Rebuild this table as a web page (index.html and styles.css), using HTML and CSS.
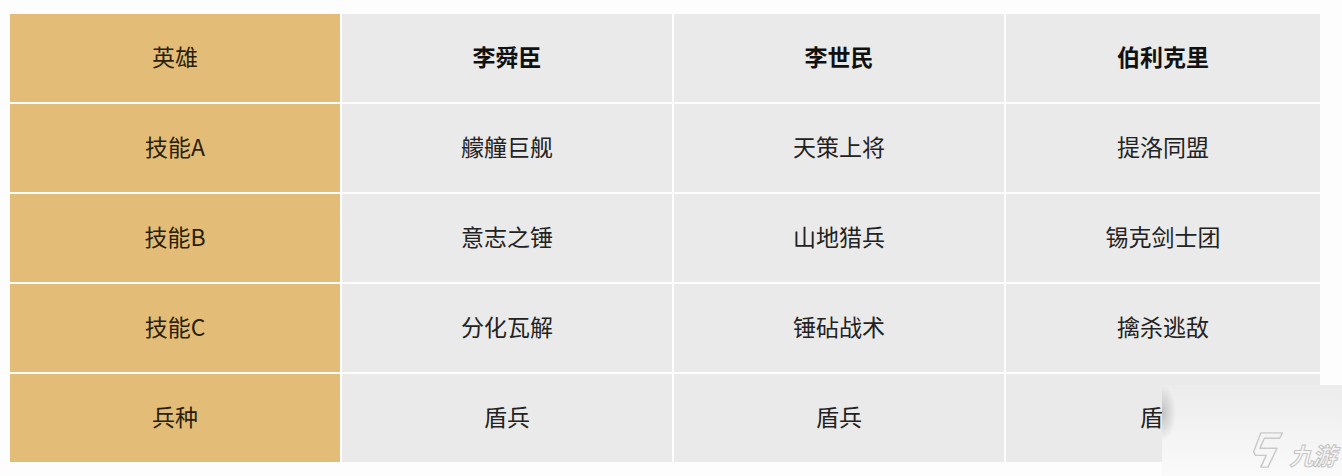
FILE: index.html
```html
<!DOCTYPE html>
<html lang="zh">
<head>
<meta charset="utf-8">
<link rel="stylesheet" href="styles.css">
</head>
<body>
<div class="table">
  <div class="cell key">英雄</div>
  <div class="cell head">李舜臣</div>
  <div class="cell head">李世民</div>
  <div class="cell head">伯利克里</div>

  <div class="cell key">技能A</div>
  <div class="cell">艨艟巨舰</div>
  <div class="cell">天策上将</div>
  <div class="cell">提洛同盟</div>

  <div class="cell key">技能B</div>
  <div class="cell">意志之锤</div>
  <div class="cell">山地猎兵</div>
  <div class="cell">锡克剑士团</div>

  <div class="cell key">技能C</div>
  <div class="cell">分化瓦解</div>
  <div class="cell">锤砧战术</div>
  <div class="cell">擒杀逃敌</div>

  <div class="cell key">兵种</div>
  <div class="cell">盾兵</div>
  <div class="cell">盾兵</div>
  <div class="cell">盾兵</div>
</div>
<div class="watermark">
  <svg class="logo-mark" viewBox="0 0 40 44" width="36" height="40">
    <path d="M12 3 H36 L33 9 H16 L11 20 H30 L20 41 H12 L18 28 H6 L4 24 Z" fill="none" stroke="#c9c9c9" stroke-width="1.6" stroke-linejoin="round"/>
  </svg>
  <span class="logo-text">九游</span>
</div>
</body>
</html>
```
FILE: styles.css
```css
html, body {
  margin: 0;
  padding: 0;
  background: #fdfdfd;
}
body {
  width: 1342px;
  height: 476px;
  position: relative;
  overflow: hidden;
  font-family: "Noto Sans CJK SC", "Noto Sans", sans-serif;
}
.table {
  display: grid;
  grid-template-columns: 330px 330px 330px 314px;
  grid-auto-rows: 88px;
  gap: 2px;
  margin: 14px 0 0 10px;
  width: 1310px;
}
.cell {
  background: #eaeaea;
  display: flex;
  align-items: center;
  justify-content: center;
  font-size: 23px;
  color: #222;
  padding-bottom: 5px;
  box-sizing: border-box;
}
.cell.key {
  background: #e3bd77;
  color: #2b1d0c;
}
.cell.head {
  font-weight: bold;
  color: #111;
}
.watermark {
  position: absolute;
  left: 1162px;
  top: 385px;
  right: 0;
  bottom: 0;
  background:
    radial-gradient(ellipse 14px 28px at 0 28px, rgba(0,0,0,0.2), rgba(0,0,0,0) 100%),
    linear-gradient(180deg, rgb(236,236,236), rgb(250,250,250));
  display: flex;
  align-items: flex-end;
  justify-content: flex-end;
  padding: 0 4px 6px 0;
  gap: 6px;
}
.logo-mark {
  display: block;
}
.logo-text {
  font-family: "Noto Sans CJK SC", sans-serif;
  font-size: 24px;
  font-weight: bold;
  color: #f7f7f7;
  -webkit-text-stroke: 1px #c4c4c4;
  transform: skewX(-14deg);
  line-height: 30px;
  letter-spacing: -1px;
}
```
